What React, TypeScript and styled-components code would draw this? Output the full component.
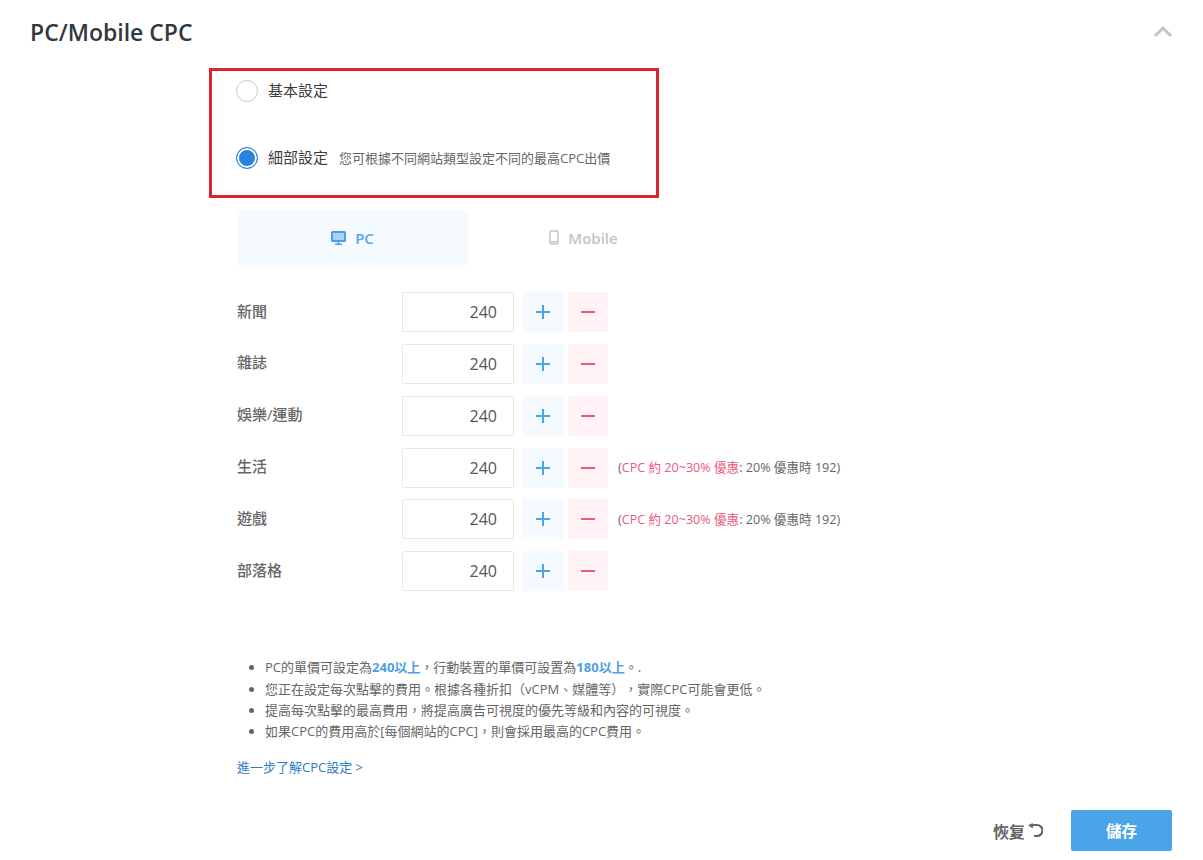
import React from "react";
import styled, { createGlobalStyle } from "styled-components";

const GlobalStyle = createGlobalStyle`
  html, body {
    margin: 0;
    padding: 0;
    background: #fff;
    font-family: "Open Sans", "Noto Sans CJK TC", sans-serif;
    color: #555;
  }
`;

const Page = styled.div`
  width: 1203px;
  height: 860px;
  overflow: hidden;
  box-sizing: border-box;
  padding-top: 17px;
`;

const Header = styled.div`
  display: flex;
  justify-content: space-between;
  align-items: center;
  height: 30px;
  padding: 0 30px;
`;

const Title = styled.h2`
  margin: 0;
  font-size: 23px;
  font-weight: 600;
  color: #33383d;
`;

const Chevron = styled.svg`
  width: 20px;
  height: 12px;
  margin-top: -2px;
`;

const Body = styled.div`
  margin: 21px 0 0 209px;
`;

const RadioBox = styled.div`
  box-sizing: border-box;
  width: 450px;
  height: 130px;
  border: 3px solid #d9232e;
  padding: 9px 0 0 24px;
  display: flex;
  flex-direction: column;
  gap: 45px;
`;

const RadioRow = styled.label`
  display: flex;
  align-items: center;
  height: 22px;
`;

const RadioMark = styled.span<{ $on?: boolean }>`
  box-sizing: border-box;
  width: 22px;
  height: 22px;
  border-radius: 50%;
  margin-right: 10px;
  border: 1px solid ${(p) => (p.$on ? "#2a82dc" : "#c9c9c9")};
  background: ${(p) => (p.$on ? "#2a82dc" : "#fff")};
  box-shadow: ${(p) => (p.$on ? "inset 0 0 0 2px #fff" : "none")};
`;

const RadioLabel = styled.span`
  font-size: 15px;
  color: #3c3c3c;
  margin-top: -4px;
`;

const RadioHint = styled.span`
  font-size: 13px;
  color: #666;
  margin: -2px 0 0 11px;
`;

const Form = styled.div`
  margin: 12px 0 0 28px;
`;

const Tabs = styled.div`
  display: flex;
`;

const Tab = styled.div<{ $active?: boolean }>`
  width: 231px;
  height: 55px;
  display: flex;
  align-items: center;
  justify-content: center;
  gap: 9px;
  font-size: 15px;
  font-weight: 600;
  background: ${(p) => (p.$active ? "#f5faff" : "#fff")};
  color: ${(p) => (p.$active ? "#5ba5e6" : "#c4c4c4")};
`;

const Rows = styled.div`
  margin-top: 27px;
  display: flex;
  flex-direction: column;
  gap: 11.85px;
`;

const Row = styled.div`
  display: flex;
  align-items: center;
  height: 40px;
`;

const RowLabel = styled.div`
  width: 165px;
  font-size: 15px;
  font-weight: 500;
  color: #666;
  margin-top: -4px;
`;

const Amount = styled.div`
  box-sizing: border-box;
  width: 112px;
  height: 40px;
  border: 1px solid #e8e8e8;
  border-radius: 2px;
  text-align: right;
  padding-right: 16px;
  line-height: 38px;
  font-size: 16px;
  color: #555;
`;

const StepButton = styled.div<{ $minus?: boolean }>`
  width: ${(p) => (p.$minus ? "40px" : "42px")};
  height: 40px;
  margin-left: ${(p) => (p.$minus ? "4px" : "8px")};
  display: flex;
  align-items: center;
  justify-content: center;
  background: ${(p) => (p.$minus ? "#fff3f6" : "#f4faff")};
`;

const Discount = styled.div`
  margin: -2px 0 0 10px;
  font-size: 12.6px;
  color: #666;
`;

const Pink = styled.span`
  color: #ec5a80;
`;

const Notes = styled.ul`
  margin: 66px 0 0;
  padding: 0 0 0 28px;
  font-size: 13px;
  line-height: 21.3px;
  color: #666;
  text-spacing-trim: space-all;
`;

const Strong = styled.b`
  color: #4e9fe6;
  font-weight: 700;
`;

const MoreLink = styled.a`
  display: block;
  margin-top: 15px;
  font-size: 13px;
  line-height: 20px;
  color: #2a7cc7;
`;

const Footer = styled.div`
  display: flex;
  justify-content: flex-end;
  align-items: center;
  margin-top: 33px;
  padding-right: 31px;
`;

const ResetButton = styled.div`
  display: flex;
  align-items: center;
  gap: 3px;
  margin-right: 28px;
  font-size: 16px;
  font-weight: 700;
  color: #666;
`;

const SaveButton = styled.div`
  width: 101px;
  height: 41px;
  border-radius: 2px;
  background: #4ba3e8;
  color: #fff;
  font-size: 15.5px;
  font-weight: 600;
  display: flex;
  align-items: center;
  justify-content: center;
`;

const categories = [
  { name: "新聞" },
  { name: "雜誌" },
  { name: "娛樂/運動" },
  { name: "生活", discount: true },
  { name: "遊戲", discount: true },
  { name: "部落格" },
];

const Plus = () => (
  <svg width="16" height="16" viewBox="0 0 16 16">
    <path d="M8 1v14M1 8h14" stroke="#4ba3e8" strokeWidth="2" />
  </svg>
);

const Minus = () => (
  <svg width="16" height="16" viewBox="0 0 16 16">
    <path d="M1 8h14" stroke="#ec5a80" strokeWidth="2" />
  </svg>
);

const App = () => {
  return (
    <Page>
      <GlobalStyle />
      <Header>
        <Title>PC/Mobile CPC</Title>
        <Chevron viewBox="0 0 20 12">
          <path d="M2 11l8-8 8 8" fill="none" stroke="#c4c4c4" strokeWidth="3" />
        </Chevron>
      </Header>
      <Body>
        <RadioBox>
          <RadioRow>
            <RadioMark />
            <RadioLabel>基本設定</RadioLabel>
          </RadioRow>
          <RadioRow>
            <RadioMark $on />
            <RadioLabel>細部設定</RadioLabel>
            <RadioHint>您可根據不同網站類型設定不同的最高CPC出價</RadioHint>
          </RadioRow>
        </RadioBox>
        <Form>
          <Tabs>
            <Tab $active>
              <svg width="15" height="14" viewBox="0 0 15 14">
                <rect x="1" y="1" width="13" height="9" rx="0.5" fill="#a9d3f3" stroke="#4e9fe6" strokeWidth="2" />
                <path d="M7.500 11v2M4 13.200h7" stroke="#4e9fe6" strokeWidth="1.500" />
              </svg>
              PC
            </Tab>
            <Tab>
              <svg width="10" height="15" viewBox="0 0 10 15">
                <rect x="1" y="1" width="8" height="13" rx="1.500" fill="#fff" stroke="#c4c4c4" strokeWidth="1.600" />
                <path d="M2 11.800h6" stroke="#c4c4c4" strokeWidth="1.500" />
              </svg>
              Mobile
            </Tab>
          </Tabs>
          <Rows>
            {categories.map((c) => (
              <Row key={c.name}>
                <RowLabel>{c.name}</RowLabel>
                <Amount>240</Amount>
                <StepButton>
                  <Plus />
                </StepButton>
                <StepButton $minus>
                  <Minus />
                </StepButton>
                {c.discount && (
                  <Discount>
                    (<Pink>CPC 約 20~30% 優惠</Pink>: 20% 優惠時 192)
                  </Discount>
                )}
              </Row>
            ))}
          </Rows>
          <Notes>
            <li>
              PC的單價可設定為<Strong>240以上</Strong>，行動裝置的單價可設置為<Strong>180以上</Strong>。.
            </li>
            <li>您正在設定每次點擊的費用。根據各種折扣（vCPM、媒體等），實際CPC可能會更低。</li>
            <li>提高每次點擊的最高費用，將提高廣告可視度的優先等級和內容的可視度。</li>
            <li>如果CPC的費用高於[每個網站的CPC]，則會採用最高的CPC費用。</li>
          </Notes>
          <MoreLink>進一步了解CPC設定 &gt;</MoreLink>
        </Form>
      </Body>
      <Footer>
        <ResetButton>
          恢复
          <svg width="15" height="15" viewBox="0 0 15 15">
            <path d="M3.500 2h5.500a5 5 0 0 1 0 11H6" fill="none" stroke="#666" strokeWidth="2.200" />
            <path d="M0 2.200L4.800 0v5.500z" fill="#666" />
          </svg>
        </ResetButton>
        <SaveButton>儲存</SaveButton>
      </Footer>
    </Page>
  );
};

export default App;
